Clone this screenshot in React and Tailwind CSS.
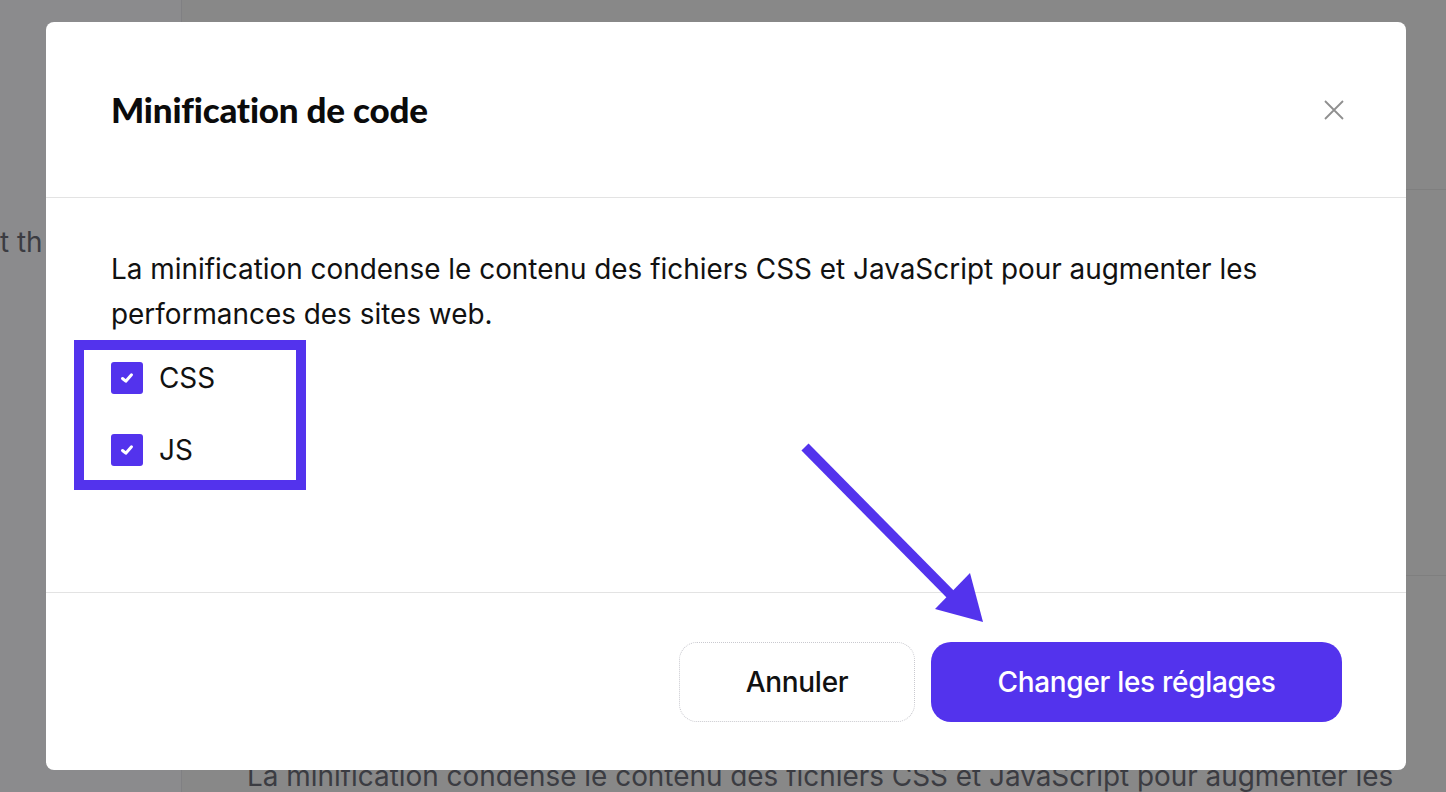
export default function App() {
  return (
    <div className="relative flex h-[792px] w-[1446px] overflow-hidden bg-[#888888] font-['Inter',sans-serif]">
      {/* page behind the overlay */}
      <aside className="w-[182px] shrink-0 border-r border-[#808083] bg-[#8b8b8d]" />
      <main className="flex flex-1 flex-col">
        <div className="h-[190px] border-b border-[#7f7f7f]" />
        <div className="h-[387px] border-b border-[#7f7f7f]" />
        <p className="mt-[184px] pl-[65px] text-[27.9px] leading-[32px] whitespace-nowrap text-[#3b3c42]">
          La minification condense le contenu des fichiers CSS et JavaScript pour augmenter les
        </p>
      </main>
      <span className="absolute top-[226px] left-0 text-[27.9px] leading-[32px] text-[#3b3c42]">t th</span>

      {/* modal */}
      <div className="absolute top-[22px] left-[46px] flex h-[748px] w-[1360px] flex-col rounded-[8px] bg-white">
        <header className="flex h-[176px] shrink-0 items-center justify-between border-b border-[#e3e3e3] pr-[61px] pl-[65px]">
          <h2 className="font-['Lato',sans-serif] text-[35px] font-black tracking-[-0.2px] text-[#0b0b0b]">
            Minification de code
          </h2>
          <svg width="22" height="22" viewBox="0 0 22 22" className="text-[#8f8f8f]">
            <path d="M2 2 L20 20 M20 2 L2 20" stroke="currentColor" strokeWidth="1.8" fill="none" />
          </svg>
        </header>

        <section className="flex-1 border-b border-[#e3e3e3] px-[65px] pt-[49px]">
          <p className="text-[27.9px] leading-[45px] text-[#111]">
            La minification condense le contenu des fichiers CSS et JavaScript pour augmenter les performances des sites web.
          </p>
          <div className="mt-[25px] flex flex-col gap-[40px]">
            {['CSS', 'JS'].map((label) => (
              <label key={label} className="flex items-center gap-[16px]">
                <span className="flex h-[32px] w-[32px] items-center justify-center rounded-[3px] bg-[#5333ed]">
                  <svg width="16" height="16" viewBox="0 0 16 16">
                    <path d="M3.5 8.5 L6.8 11.2 L12.5 4.8" stroke="white" strokeWidth="3" fill="none" strokeLinecap="round" strokeLinejoin="round" />
                  </svg>
                </span>
                <span className="text-[27.9px] leading-[32px] text-[#111]">{label}</span>
              </label>
            ))}
          </div>
        </section>

        <footer className="flex h-[177px] shrink-0 items-center justify-end gap-[16px] pr-[64px]">
          <button className="h-[80px] w-[236px] rounded-[18px] border border-dotted border-[#c9c9cf] bg-white text-[28px] font-medium tracking-[-0.3px] text-[#111]">
            Annuler
          </button>
          <button className="h-[80px] w-[411px] rounded-[20px] bg-[#5333ed] text-[28px] font-medium tracking-[-0.3px] text-white">
            Changer les réglages
          </button>
        </footer>
      </div>

      {/* annotation highlight */}
      <div className="absolute top-[340px] left-[74px] h-[150px] w-[232px] border-[10px] border-[#5333ed]" />

      {/* annotation arrow */}
      <svg className="absolute top-0 left-0" width="1446" height="792" viewBox="0 0 1446 792">
        <path d="M805 447 L960 604" stroke="#5333ed" strokeWidth="10" fill="none" />
        <path d="M983 622 L970 573 L935 609 Z" fill="#5333ed" />
      </svg>
    </div>
  )
}
